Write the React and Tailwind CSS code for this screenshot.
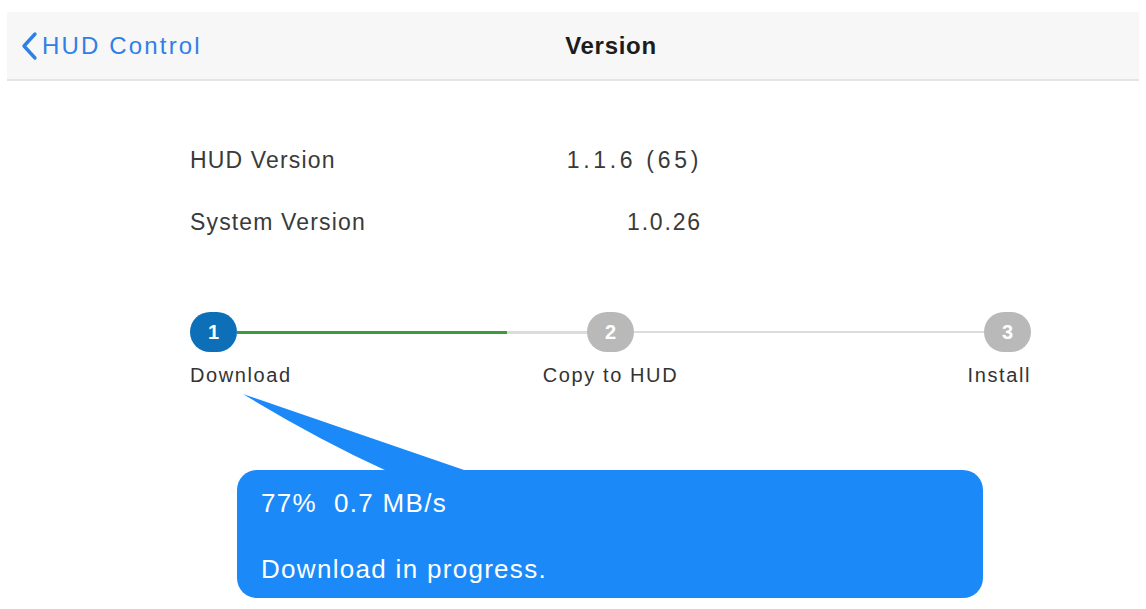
import React from "react";

const font = { fontFamily: '"Liberation Sans", Arial, sans-serif' };

function Step({ n, active }) {
  return (
    <div
      className={`w-[47px] h-[40px] shrink-0 rounded-full flex items-center justify-center text-white text-[20px] font-bold ${
        active ? "bg-[#0d6fb8]" : "bg-[#b9b9b9]"
      }`}
    >
      {n}
    </div>
  );
}

function App() {
  const progress = 77;

  return (
    <div className="w-[1146px] h-[609px] bg-white overflow-hidden" style={font}>
      <div className="mt-[12px] mx-[7px] h-[69px] bg-[#f7f7f7] border-b-2 border-[#e4e4e4] relative flex items-center justify-center pl-[76px]">
        <div className="absolute left-[12px] top-0 h-full flex items-center text-[#2f80e6]">
          <svg width="20" height="30" viewBox="0 0 20 30" fill="none">
            <path d="M16 3 L5 15 L16 27" stroke="currentColor" strokeWidth="3.4" strokeLinecap="round" strokeLinejoin="round" />
          </svg>
          <span className="ml-[3px] text-[24px] tracking-[0.09em]">HUD Control</span>
        </div>
        <div className="text-[24px] font-bold text-[#1c1c1c] tracking-[0.03em]">Version</div>
      </div>

      <div className="ml-[190px] w-[512px] mt-[48px] text-[23px] text-[#3a3a3a] tracking-[0.05em]">
        <div className="h-[62px] flex items-center justify-between">
          <span>HUD Version</span>
          <span className="tracking-[0.16em]">1.1.6 (65)</span>
        </div>
        <div className="h-[62px] flex items-center justify-between">
          <span>System Version</span>
          <span className="tracking-[0.08em]">1.0.26</span>
        </div>
      </div>

      <div className="ml-[190px] w-[841px] mt-[59px]">
        <div className="flex items-center">
          <Step n="1" active />
          <div className="flex-1 h-[3px] bg-[#dcdcdc] relative">
            <div className="h-[3px] bg-[#3d9a3d]" style={{ width: `${progress}%` }} />
          </div>
          <Step n="2" />
          <div className="flex-1 h-[2px] bg-[#dcdcdc]" />
          <Step n="3" />
        </div>
        <div className="grid grid-cols-3 mt-[11px] text-[20px] text-[#333] tracking-[0.08em] leading-[24px]">
          <span className="justify-self-start">Download</span>
          <span className="justify-self-center">Copy to HUD</span>
          <span className="justify-self-end">Install</span>
        </div>
      </div>

      <div className="ml-[237px] mt-[83px] w-[746px] h-[128px] relative">
        <svg className="absolute left-0 bottom-full" width="240" height="76" viewBox="0 0 240 76">
          <path d="M6 0 Q80 45 150 77 L230 77 Z" fill="#1b8af8" />
        </svg>
        <div className="w-full h-full bg-[#1b8af8] rounded-[20px] pl-[24px] pt-[3px] flex flex-col justify-center gap-[38px] text-white text-[26px] tracking-[0.05em] leading-[28px]">
          <div>77%&nbsp;&nbsp;0.7 MB/s</div>
          <div>Download in progress.</div>
        </div>
      </div>
    </div>
  );
}

export default App;
